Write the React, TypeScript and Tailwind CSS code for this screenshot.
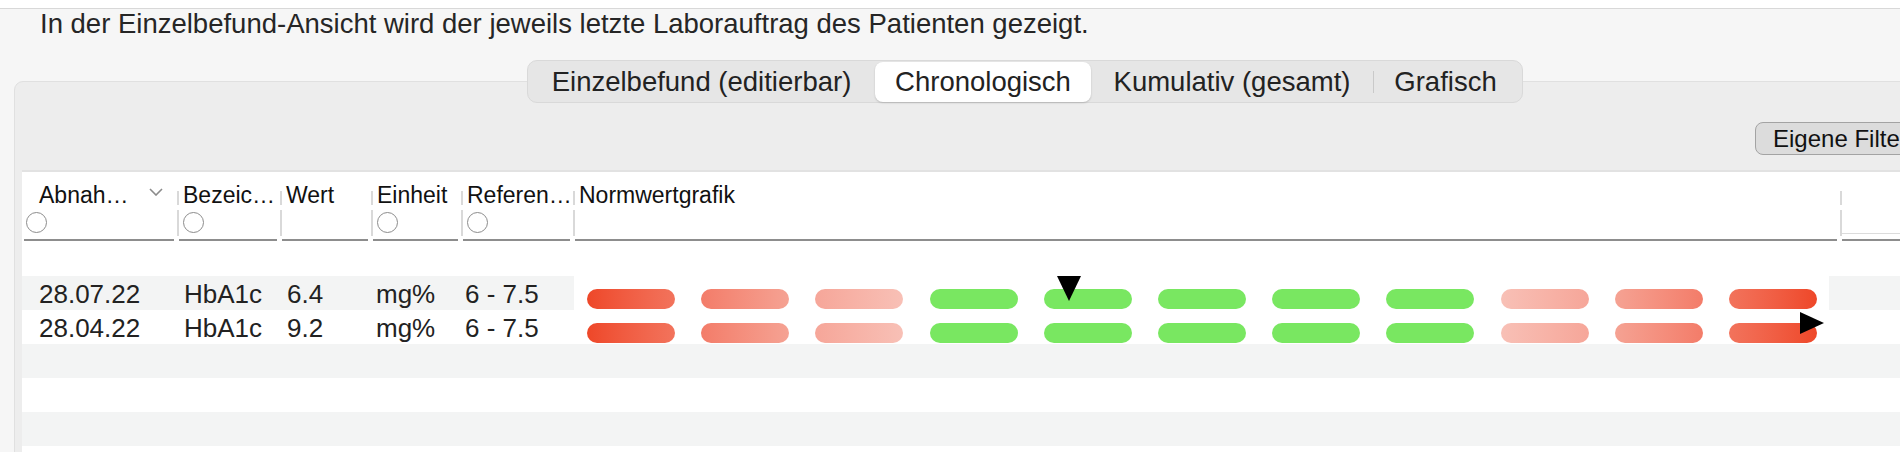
import React from "react";

const pillColors = [
  "bg-gradient-to-r from-[#ee4728] to-[#f2735c]",
  "bg-gradient-to-r from-[#f37c69] to-[#f5a293]",
  "bg-gradient-to-r from-[#f6a699] to-[#f8c0b6]",
  "bg-[#79e761]",
  "bg-[#79e761]",
  "bg-[#79e761]",
  "bg-[#79e761]",
  "bg-[#79e761]",
  "bg-gradient-to-r from-[#f8c0b6] to-[#f6a699]",
  "bg-gradient-to-r from-[#f5a293] to-[#f37c69]",
  "bg-gradient-to-r from-[#f2735c] to-[#ee4728]",
];

interface HeaderCellProps {
  width: string;
  title?: string;
  radio?: boolean;
  first?: boolean;
  chevron?: boolean;
  field?: boolean;
}

function Separator() {
  return (
    <div className="flex w-[2px] shrink-0 flex-col">
      <div className="mt-[19px] h-[14px] bg-[#d9d9d9]" />
      <div className="mt-[5px] h-[26px] bg-[#d9d9d9]" />
    </div>
  );
}

function Radio() {
  return <div className="mt-[3px] h-[21px] w-[21px] rounded-full border border-[#8c8c8c] bg-white" />;
}

function HeaderCell({ width, title, radio, first, chevron, field }: HeaderCellProps) {
  return (
    <div className={`${width} shrink-0`}>
      <div className="flex h-[67px]">
        {!first && <Separator />}
        {field ? (
          <div className="mt-[61px] h-px flex-1 bg-[#dcdcdc]" />
        ) : (
          <div className="flex flex-1 flex-col pl-[4px] pt-[9px]">
            <div className="flex h-[28px] items-start justify-between">
              <span className={`text-[23px] leading-[28px] text-[#111] ${first ? "pl-[13px]" : ""}`}>{title}</span>
              {chevron && (
                <svg width="14" height="8" viewBox="0 0 14 8" className="mr-[14px] mt-[7px]">
                  <path d="M1 1 L7 7 L13 1" fill="none" stroke="#8b8b8b" strokeWidth="1.6" />
                </svg>
              )}
            </div>
            {radio ? <Radio /> : <div className="mt-[3px] h-[21px]" />}
          </div>
        )}
      </div>
      <div className="ml-[2px] mr-[3px] h-[2px] bg-[#8d8d8d]" />
    </div>
  );
}

function Pills() {
  return (
    <>
      {pillColors.map((c, i) => (
        <div key={i} className={`h-[20px] w-[88px] shrink-0 rounded-full ${c}`} />
      ))}
    </>
  );
}

interface DataRowProps {
  date: string;
  value: string;
  marker: "down" | "right";
}

function DataRow({ date, value, marker }: DataRowProps) {
  const striped = marker === "down";
  return (
    <div className={`flex h-[34px] text-[26px] leading-[34px] text-[#222] ${striped ? "bg-[#f3f4f4]" : "bg-white"}`}>
      <div className="w-[155px] shrink-0 pl-[17px] pt-[1px]">{date}</div>
      <div className="w-[103px] shrink-0 pl-[7px] pt-[1px]">HbA1c</div>
      <div className="w-[91px] shrink-0 pl-[7px] pt-[1px]">{value}</div>
      <div className="w-[90px] shrink-0 pl-[5px] pt-[1px]">mg%</div>
      <div className="w-[112px] shrink-0 pl-[4px] pt-[1px]">6 - 7.5</div>
      <div className="w-[1267px] shrink-0 pl-[1px]">
        <div className="relative flex h-full w-[1255px] gap-[26.2px] bg-white pl-[13px] pt-[13px]">
          <Pills />
          {marker === "down" ? (
            <svg width="24" height="25" viewBox="0 0 24 25" className="absolute left-[483px] top-0">
              <polygon points="0,0 24,0 12,25" fill="#000" />
            </svg>
          ) : (
            <svg width="24" height="22" viewBox="0 0 24 22" className="absolute left-[1226px] top-[2px]">
              <polygon points="0,0 24,11 0,22" fill="#000" />
            </svg>
          )}
        </div>
      </div>
    </div>
  );
}

export default function App() {
  return (
    <div className="h-[452px] w-[1900px] overflow-hidden bg-[#f6f6f6] font-['Liberation_Sans',Arial,sans-serif]">
      <div className="h-[9px] border-b border-[#d8d8d8] bg-white" />
      <div className="h-[72px] pl-[40px] text-[27.5px] leading-[30px] text-[#262626]">
        In der Einzelbefund-Ansicht wird der jeweils letzte Laborauftrag des Patienten gezeigt.
      </div>

      <section className="ml-[14px] w-[2021px] rounded-t-[9px] border border-[#e0e0e0] bg-[#ededed] pb-[40px]">
        <div className="-mt-[22px] flex">
          <div className="ml-[512px] flex h-[43px] items-center rounded-[10px] border border-[#d9d9d9] bg-[#e6e6e6] pr-[5px] text-[27.5px] text-[#222]">
            <div className="flex w-[347px] justify-center">Einzelbefund (editierbar)</div>
            <div className="flex h-[40px] w-[216px] items-center justify-center rounded-[8px] bg-white shadow-[0_1px_2px_rgba(0,0,0,0.18)]">
              Chronologisch
            </div>
            <div className="flex w-[282px] justify-center">Kumulativ (gesamt)</div>
            <div className="h-[22px] w-px bg-[#c9c9c9]" />
            <div className="flex w-[143px] justify-center">Grafisch</div>
          </div>
        </div>

        <div className="mt-[19px] flex">
          <button className="ml-[1740px] h-[33px] whitespace-nowrap rounded-[8px] border border-[#a3a3a3] bg-[#dcdcdc] px-[17px] text-[24px] leading-[31px] text-[#111]">
            Eigene Filter
          </button>
        </div>

        <div className="ml-[7px] mt-[15px] border-t-2 border-[#e2e2e2] bg-white">
          <div className="flex">
            <HeaderCell width="w-[155px]" title="Abnah…" radio first chevron />
            <HeaderCell width="w-[103px]" title="Bezeic…" radio />
            <HeaderCell width="w-[91px]" title="Wert" />
            <HeaderCell width="w-[90px]" title="Einheit" radio />
            <HeaderCell width="w-[112px]" title="Referen…" radio />
            <HeaderCell width="w-[1267px]" title="Normwertgrafik" />
            <HeaderCell width="w-[180px]" field />
          </div>

          <div className="h-[35px]" />
          <DataRow date="28.07.22" value="6.4" marker="down" />
          <DataRow date="28.04.22" value="9.2" marker="right" />
          <div className="h-[34px] bg-[#f3f4f4]" />
          <div className="h-[34px]" />
          <div className="h-[34px] bg-[#f3f4f4]" />
          <div className="h-[34px]" />
        </div>
      </section>
    </div>
  );
}
